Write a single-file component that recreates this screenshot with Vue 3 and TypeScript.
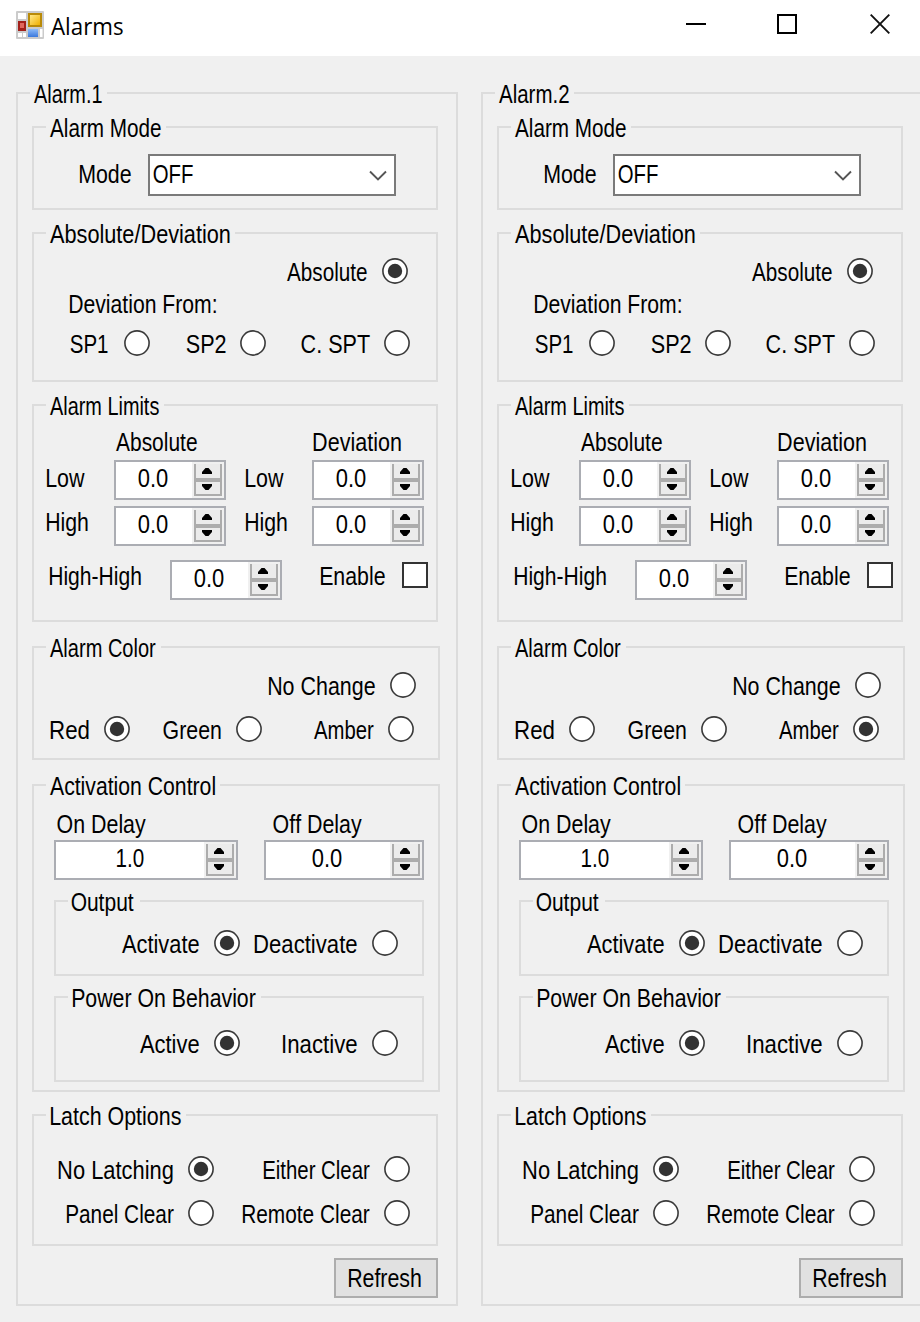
<script setup lang="ts">
import { h, reactive } from 'vue'

const UI_FONT = '"Liberation Sans"'
const TITLE_FONT = '"Open Sans"'
const ctx = document.createElement('canvas').getContext('2d')!
ctx.fontKerning = 'none'

/* Condenses a text horizontally so that its ink fills exactly `width` pixels. */
function fit(text: string, width: number, size: number, family: string) {
  ctx.font = `${size * 20}px ${family}`
  const m = ctx.measureText(text)
  const bearing = -m.actualBoundingBoxLeft / 20
  const ink = m.actualBoundingBoxRight / 20 - bearing
  // letters that open with a vertical stem keep a little air before it
  const inset = Math.max(0, Math.min(0.8, bearing * 0.5))
  const s = (width - inset - 0.3) / ink
  return {
    width: `${width}px`,
    transform: `translate(${(inset - bearing * s).toFixed(3)}px, ${size === 26 ? 1 : 0}px) scaleX(${s.toFixed(4)})`,
  }
}

function Txt(props: { t: string; w: number; title?: boolean }) {
  const style = props.title ? fit(props.t, props.w, 23, TITLE_FONT) : fit(props.t, props.w, 26, UI_FONT)
  return h('span', { class: 'txt', style }, props.t)
}
Txt.props = { t: String, w: Number, title: Boolean }

function Radio(props: { on?: boolean }) {
  return h('svg', { class: 'radio', viewBox: '0 0 26 26', width: 26, height: 26 }, [
    h('circle', { cx: 13, cy: 13, r: 12.1, fill: '#fff', stroke: '#3a3a3a', 'stroke-width': 1.6 }),
    props.on ? h('circle', { cx: 13, cy: 13, r: 7.2, fill: '#333' }) : null,
  ])
}
Radio.props = { on: Boolean }

function Arrows() {
  return h('svg', { class: 'arrows', viewBox: '0 0 32 36', width: 32, height: 36 }, [
    h('rect', { x: 0, y: 0, width: 32, height: 36, fill: '#f0f0f0' }),
    h('rect', { x: 2, y: 2, width: 28, height: 32, fill: '#acacac' }),
    h('rect', { x: 4, y: 2, width: 24, height: 14, fill: '#ebebeb' }),
    h('rect', { x: 4, y: 20, width: 24, height: 12, fill: '#ebebeb' }),
    h('path', { d: 'M13.5 6h3l3.500 4v2H10v-2z', fill: '#000' }),
    h('path', { d: 'M10 22h10v2l-3.500 4h-3L10 24z', fill: '#000' }),
  ])
}

interface Alarm { name: string; nameWidth: number; color: 'none' | 'red' | 'green' | 'amber' }
const alarms = reactive<Alarm[]>([
  { name: 'Alarm.1', nameWidth: 68, color: 'red' },
  { name: 'Alarm.2', nameWidth: 70, color: 'amber' },
])
</script>

<template>
  <div class="window">
    <header class="titlebar">
      <svg class="app-icon" width="28" height="28" viewBox="0 0 28 28">
        <defs>
          <linearGradient id="gold" x2="1" y2="1"><stop offset="0" stop-color="#ffe88a" /><stop offset="1" stop-color="#f0b000" /></linearGradient>
          <linearGradient id="blue" x2="0" y2="1"><stop offset="0" stop-color="#8dbbf8" /><stop offset="1" stop-color="#3b78dc" /></linearGradient>
        </defs>
        <rect width="28" height="28" rx="1" fill="#cbcbcb" />
        <rect x="2" y="2" width="8" height="6" fill="#fff" />
        <rect x="2" y="22" width="4" height="4" fill="#fff" />
        <rect x="7" y="22" width="3" height="4" fill="#fff" />
        <rect x="24" y="18" width="2.500" height="8" fill="#fff" />
        <rect x="2" y="10" width="8" height="10" fill="#a3201a" />
        <rect x="4" y="12" width="4" height="5" fill="#e0675d" />
        <rect x="12" y="2" width="14" height="14" fill="#b98a08" />
        <rect x="14" y="4" width="10" height="10" fill="url(#gold)" />
        <rect x="12" y="18" width="10" height="8" fill="url(#blue)" />
      </svg>
      <Txt class="title" t="Alarms" :w="72" title />
      <div class="controls">
        <svg width="20" height="20"><path d="M0 10h20" stroke="#000" stroke-width="2" /></svg>
        <svg width="20" height="20"><rect x="1" y="1" width="18" height="18" fill="none" stroke="#000" stroke-width="2" /></svg>
        <svg width="20" height="20"><path d="M.7.7l18.600 18.600M19.300.7L.7 19.300" stroke="#111" stroke-width="1.900" /></svg>
      </div>
    </header>

    <main class="client">
      <section v-for="a in alarms" :key="a.name" class="group alarm">
        <div class="legend"><Txt :t="a.name" :w="a.nameWidth" /></div>

        <section class="group mode">
          <div class="legend"><Txt t="Alarm Mode" :w="111" /></div>
          <div class="row mode-row">
            <Txt t="Mode" :w="52" />
            <div class="combo">
              <Txt t="OFF" :w="40" />
              <svg width="18" height="12" viewBox="0 0 18 12"><path d="M1 1.500l8 8 8-8" fill="none" stroke="#555" stroke-width="1.900" /></svg>
            </div>
          </div>
        </section>

        <section class="group deviation">
          <div class="legend"><Txt t="Absolute/Deviation" :w="180" /></div>
          <div class="row absolute-row"><Txt t="Absolute" :w="80" /><Radio on /></div>
          <div class="row from-row"><Txt t="Deviation From:" :w="147" /></div>
          <div class="row sp-row">
            <Txt t="SP1" :w="38" /><Radio />
            <Txt t="SP2" :w="40" /><Radio />
            <Txt t="C. SPT" :w="69" /><Radio />
          </div>
        </section>

        <section class="group limits">
          <div class="legend"><Txt t="Alarm Limits" :w="109" /></div>
          <div class="row heads"><Txt t="Absolute" :w="81" /><Txt t="Deviation" :w="88" /></div>
          <div class="row pair low">
            <Txt t="Low" :w="39" /><div class="spin"><div class="value"><Txt t="0.0" :w="30" /></div><Arrows /></div>
            <Txt t="Low" :w="39" /><div class="spin"><div class="value"><Txt t="0.0" :w="30" /></div><Arrows /></div>
          </div>
          <div class="row pair high">
            <Txt t="High" :w="42" /><div class="spin"><div class="value"><Txt t="0.0" :w="30" /></div><Arrows /></div>
            <Txt t="High" :w="42" /><div class="spin"><div class="value"><Txt t="0.0" :w="30" /></div><Arrows /></div>
          </div>
          <div class="row high-high">
            <Txt t="High-High" :w="92" /><div class="spin"><div class="value"><Txt t="0.0" :w="30" /></div><Arrows /></div>
            <Txt t="Enable" :w="65" /><div class="check"></div>
          </div>
        </section>

        <section class="group wide color">
          <div class="legend"><Txt t="Alarm Color" :w="106" /></div>
          <div class="row no-change"><Txt t="No Change" :w="107" /><Radio :on="a.color === 'none'" /></div>
          <div class="row colors">
            <Txt t="Red" :w="39" /><Radio :on="a.color === 'red'" />
            <Txt t="Green" :w="58" /><Radio :on="a.color === 'green'" />
            <Txt t="Amber" :w="60" /><Radio :on="a.color === 'amber'" />
          </div>
        </section>

        <section class="group wide activation">
          <div class="legend"><Txt t="Activation Control" :w="165" /></div>
          <div class="row delay-heads"><Txt t="On Delay" :w="89" /><Txt t="Off Delay" :w="89" /></div>
          <div class="row delays">
            <div class="spin on-delay"><div class="value"><Txt t="1.0" :w="28" /></div><Arrows /></div>
            <div class="spin off-delay"><div class="value"><Txt t="0.0" :w="30" /></div><Arrows /></div>
          </div>
          <section class="group nested output">
            <div class="legend"><Txt t="Output" :w="63" /></div>
            <div class="row output-row">
              <Txt t="Activate" :w="77" /><Radio on />
              <Txt t="Deactivate" :w="103" /><Radio />
            </div>
          </section>
          <section class="group nested power">
            <div class="legend"><Txt t="Power On Behavior" :w="184" /></div>
            <div class="row power-row">
              <Txt t="Active" :w="59" /><Radio on />
              <Txt t="Inactive" :w="75" /><Radio />
            </div>
          </section>
        </section>

        <section class="group latch">
          <div class="legend"><Txt t="Latch Options" :w="131" /></div>
          <div class="row latch-one">
            <Txt t="No Latching" :w="115" /><Radio on />
            <Txt t="Either Clear" :w="107" /><Radio />
          </div>
          <div class="row latch-two">
            <Txt t="Panel Clear" :w="108" /><Radio />
            <Txt t="Remote Clear" :w="128" /><Radio />
          </div>
        </section>

        <button class="refresh" type="button"><Txt t="Refresh" :w="73" /></button>
      </section>
    </main>
  </div>
</template>

<style>
body { margin: 0; background: #f0f0f0; }
</style>

<style scoped>
.window {
  box-sizing: border-box;
  width: 920px;
  height: 1322px;
  overflow: hidden;
  background: #f0f0f0;
  color: #000;
  font: 26px/26px "Liberation Sans", Arial, sans-serif;
}
.window * { box-sizing: border-box; }
.txt {
  display: block;
  height: 26px;
  white-space: nowrap;
  transform-origin: 0 0;
  font-kerning: none;
}

.titlebar {
  display: flex;
  height: 56px;
  padding-left: 16px;
  background: #fff;
}
.app-icon { margin-top: 11px; }
.title {
  margin: 10px 0 0 7px;
  font: 23px/32px "Open Sans", sans-serif;
}
.controls {
  display: flex;
  gap: 71px;
  margin: 14px 30px 0 auto;
}
.controls svg:last-child { margin-left: 2px; }

.client {
  display: flex;
  gap: 23px;
  width: 940px;
  padding: 36px 0 0 16px;
}
.group {
  width: 406px;
  margin-left: 14px;
  border: 2px solid #dcdcdc;
}
.alarm {
  display: flex;
  flex: none;
  flex-direction: column;
  width: 442px;
  height: 1214px;
  margin-left: 0;
}
.legend {
  width: fit-content;
  height: 26px;
  margin: -14px 0 -12px 12px;
  padding: 0 5px 0 4px;
  background: #f0f0f0;
}
.wide { width: 408px; }
.nested { width: 370px; margin: 20px 0 0 20px; }

.mode { height: 84px; margin-top: 32px; }
.deviation { height: 150px; margin-top: 22px; }
.limits { height: 218px; margin-top: 22px; }
.color { height: 114px; margin-top: 24px; }
.activation { height: 308px; margin-top: 24px; }
.output { height: 76px; }
.output .legend { padding: 0 6px 0 3px; }
.power { height: 86px; }
.latch { height: 132px; margin-top: 22px; }

.row { display: grid; align-items: start; justify-content: start; }
.radio, .arrows { display: block; }

.mode-row { grid-template-columns: 69px 248px; margin: 26px 0 0 45px; }
.mode-row > .txt { margin-top: 6px; }
.combo {
  display: flex;
  justify-content: space-between;
  height: 42px;
  padding: 4px 7px 0 3px;
  border: 2px solid #7a7a7a;
  background: #fff;
}
.combo svg { margin-top: 10px; }

.absolute-row { grid-template-columns: 95px 26px; margin: 24px 0 0 253px; }
.from-row { margin: 6px 0 0 35px; }
.sp-row { grid-template-columns: 54px 62px 54px 61px 83px 26px; margin: 14px 0 0 36px; }

.heads { grid-template-columns: 197px 88px; margin: 22px 0 0 82px; }
.pair { grid-template-columns: 68px 131px 67px 112px; margin: 6px 0 0 12px; }
.low > .txt { margin-top: 4px; }
.high > .txt { margin-top: 2px; }
.high-high { grid-template-columns: 121px 150px 82px 26px; margin: 14px 0 0 15px; }
.high-high > .txt, .check { margin-top: 2px; }
.check { width: 26px; height: 26px; border: 2px solid #333; background: #fff; }

.spin {
  display: flex;
  width: 112px;
  height: 40px;
  border: 2px solid #abadb3;
  background: #fff;
}
.value { flex: 1; padding: 2px 0 0 22px; }
.on-delay { width: 184px; }
.on-delay .value { padding-left: 60px; }
.off-delay { width: 160px; }
.off-delay .value { padding-left: 46px; }

.no-change { grid-template-columns: 122px 26px; margin: 24px 0 0 234px; }
.colors { grid-template-columns: 54px 59px 73px 78px 74px 26px; margin: 18px 0 0 16px; }

.delay-heads { grid-template-columns: 216px 89px; margin: 24px 0 0 23px; }
.delays { grid-template-columns: 210px 160px; margin: 4px 0 0 20px; }
.output-row { grid-template-columns: 92px 40px 118px 26px; margin: 28px 0 0 66px; }
.power-row { grid-template-columns: 74px 68px 90px 26px; margin: 32px 0 0 84px; }

.latch-one { grid-template-columns: 130px 75px 121px 26px; margin: 40px 0 0 24px; }
.latch-two { grid-template-columns: 122px 54px 142px 26px; margin: 18px 0 0 32px; }

.refresh {
  display: flex;
  width: 104px;
  height: 40px;
  margin: 12px 0 0 316px;
  padding: 4px 0 0 12px;
  border: 2px solid #adadad;
  background: #e1e1e1;
  color: #000;
  font: inherit;
}
</style>
